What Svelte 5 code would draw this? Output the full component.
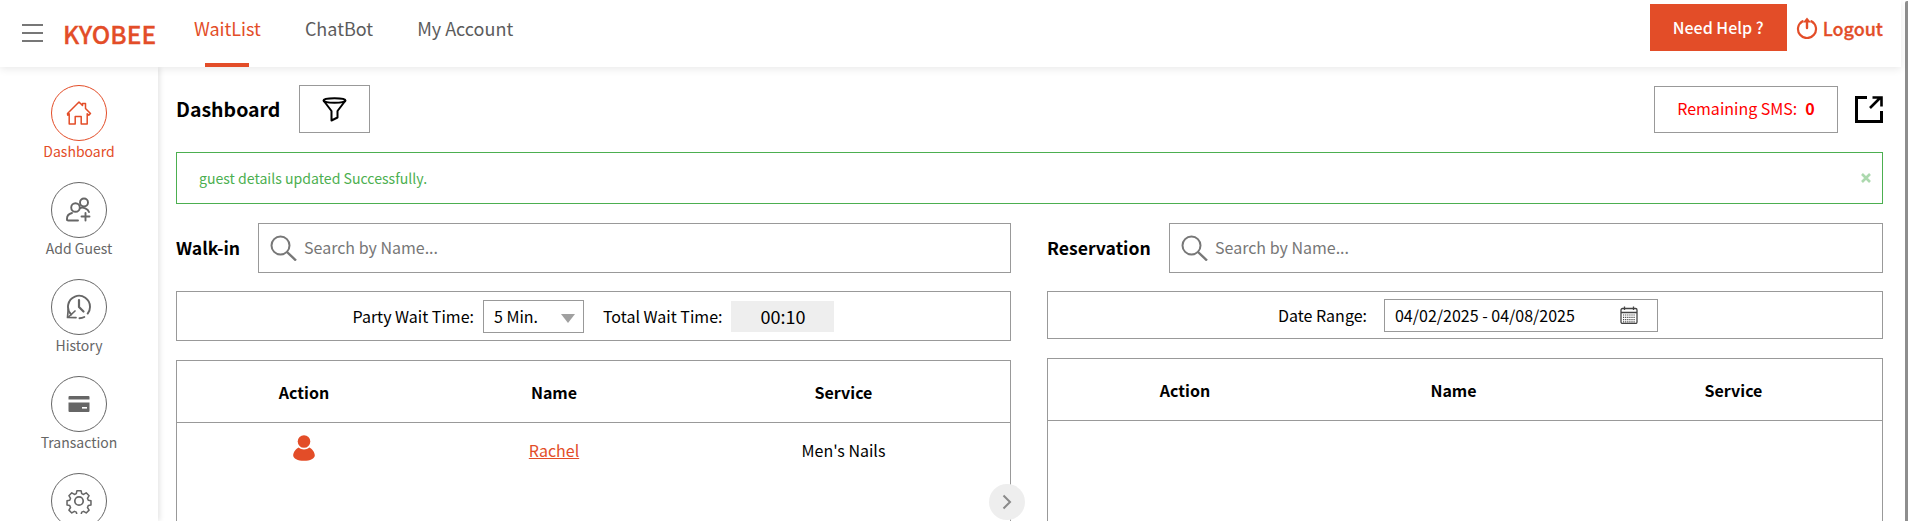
<script>
  const nav = [
    { label: 'WaitList', active: true },
    { label: 'ChatBot', active: false },
    { label: 'My Account', active: false }
  ];
  const left = { cols: '254px 246px 1fr', heads: ['Action', 'Name', 'Service'] };
  const right = { cols: '274px 263px 1fr', heads: ['Action', 'Name', 'Service'] };
</script>

<div class="page">
  <header class="top">
    <button class="burger" aria-label="menu"><span></span><span></span><span></span></button>
    <div class="logo">KYOBEE</div>
    <nav class="nav">
      {#each nav as n}
        <a class="nav-item" class:active={n.active} href="#top">{n.label}</a>
      {/each}
    </nav>
    <div class="top-right">
      <button class="help">Need Help ?</button>
      <a class="logout" href="#top">
        <svg width="22" height="22" viewBox="0 0 22 22" fill="none" stroke="#e34d28" stroke-width="2.200" stroke-linecap="round">
          <path d="M6.600 4.200a9 9 0 1 0 8.800 0" />
          <path d="M11 11V3" stroke-width="2.400" />
          <path fill="#e34d28" stroke="none" d="M11 .5 15 5.500H7z" />
        </svg>
        <span>Logout</span>
      </a>
    </div>
  </header>

  <div class="body">
    <aside class="side">
      <div class="side-item active">
        <div class="circle">
          <svg width="26" height="26" viewBox="0 0 26 26" fill="none" stroke="currentColor" stroke-width="1.500" stroke-linejoin="round">
            <path d="M1.500 13.500 13 2l3.500 3.500V3.600h3v4.900l5 5-1.700 1.600-1.600-1.400V24h-6v-7.500h-6V24h-6V13.700l-1.500 1.400z" />
          </svg>
        </div>
        <span>Dashboard</span>
      </div>
      <div class="side-item">
        <div class="circle">
          <svg width="26" height="26" viewBox="0 0 26 26" fill="none" stroke="currentColor" stroke-width="1.900" stroke-linecap="round">
            <circle cx="9.500" cy="10.500" r="4.300" />
            <circle cx="18" cy="5.500" r="4" />
            <path d="M1 23v-1.500C1 18 4 16.500 6 16M2 23.500h10M14 11c3-1 8 .5 9 4M19.500 16v7.500M15.500 19.500h8" />
          </svg>
        </div>
        <span>Add Guest</span>
      </div>
      <div class="side-item">
        <div class="circle">
          <svg width="26" height="26" viewBox="0 0 26 26" fill="none" stroke="currentColor" stroke-width="1.900" stroke-linecap="round" stroke-linejoin="round">
            <path d="M5.200 20.500A11 11 0 1 1 24 13c0 2.600-.8 4.800-2.300 6.600" />
            <path d="M13 6v7l4.500 4.500" stroke-width="2.200" />
            <path d="M13.500 24.200c1.800 0 3.300-.4 4.800-1.200" />
            <path d="M2.200 15.500 1.500 23.500l8.500.2" stroke-width="1.700" />
            <path d="M2.500 23 9 17" stroke-width="1.700" />
          </svg>
        </div>
        <span>History</span>
      </div>
      <div class="side-item">
        <div class="circle">
          <svg width="22" height="18" viewBox="0 0 22 18">
            <path fill="currentColor" d="M1.500 1h19a1 1 0 0 1 1 1v2.500H.5V2a1 1 0 0 1 1-1zM.5 7.500h21V16a1 1 0 0 1-1 1h-19a1 1 0 0 1-1-1z" />
            <rect x="14" y="12" width="5" height="1.600" fill="#fff" />
          </svg>
        </div>
        <span>Transaction</span>
      </div>
      <div class="side-item">
        <div class="circle">
          <svg width="26" height="26" viewBox="0 0 26 26" fill="none" stroke="currentColor" stroke-width="1.700" stroke-linejoin="round">
            <circle cx="13" cy="13" r="4.200" />
            <path d="M10.700 1.500h4.600l.7 3.300 2.100.9 2.900-1.800 3.200 3.200-1.800 2.900.9 2.100 3 .7v4.600l-3 .7-.9 2.100 1.800 2.900-3.200 3.200-2.900-1.800-2.100.9-.7 3h-4.600l-.7-3-2.100-.9-2.900 1.800-3.200-3.200 1.800-2.900-.9-2.100-3-.7v-4.600l3-.7.9-2.100-1.800-2.900 3.200-3.200 2.900 1.800 2.100-.9z" transform="translate(1.300 1.300) scale(.9)" />
          </svg>
        </div>
      </div>
    </aside>

    <main class="content">
      <div class="head-row">
        <h1>Dashboard</h1>
        <button class="filter" aria-label="filter">
          <svg width="25" height="25" viewBox="0 0 25 25" fill="none" stroke="#000" stroke-width="2" stroke-linejoin="round">
            <ellipse cx="12.500" cy="3.500" rx="11" ry="2.300" />
            <path d="M1.500 3.500 9.500 14v9.500l6-3V14l8-10.500" />
          </svg>
        </button>
        <div class="sms"><span>Remaining SMS:</span><b>0</b></div>
        <svg class="open" width="28" height="27" viewBox="0 0 28 27" fill="none" stroke="#000" stroke-width="3">
          <path d="M12 1.500H1.500v24h25V15" />
          <path d="M15 12 25 2M17.500 1.500h9v9" stroke-width="2.600" />
        </svg>
      </div>

      <div class="alert">
        <span>guest details updated Successfully.</span>
        <svg width="10" height="10" viewBox="0 0 10 10" stroke="#acd9ae" stroke-width="2.600"><path d="m1 1 8 8M9 1l-8 8" /></svg>
      </div>

      <div class="cols">
        <section class="col">
          <div class="search-row">
            <div class="search-label walk">Walk-in</div>
            <div class="search">
              <svg width="27" height="26" viewBox="0 0 27 26" fill="none" stroke="#777" stroke-width="2">
                <circle cx="10.500" cy="10.500" r="9" />
                <path d="m17 17 9 8.500" stroke-width="2.400" />
              </svg>
              <span>Search by Name...</span>
            </div>
          </div>
          <div class="bar tall">
            <span>Party Wait Time:</span>
            <div class="select">5 Min.<i class="tri"></i></div>
            <span class="total">Total Wait Time:</span>
            <div class="time">00:10</div>
          </div>
          <div class="table">
            <div class="thead" style="grid-template-columns: {left.cols}">
              {#each left.heads as h}<div>{h}</div>{/each}
            </div>
            <div class="tr" style="grid-template-columns: {left.cols}">
              <div class="person">
                <svg width="22" height="26" viewBox="0 0 22 26" fill="#e34d28">
                  <circle cx="11" cy="6.500" r="6.300" />
                  <path d="M5.500 12.500c3 2.500 8 2.500 11 0 3 1.500 5.300 5 5.300 8 0 3-4.500 5.300-10.800 5.300S.2 23.500.2 20.500c0-3 2.300-6.500 5.300-8z" />
                </svg>
              </div>
              <div><a class="guest" href="#top">Rachel</a></div>
              <div>Men's Nails</div>
            </div>
          </div>
          <button class="chev" aria-label="next">
            <svg width="10" height="16" viewBox="0 0 10 16" fill="none" stroke="#8a8a8a" stroke-width="2"><path d="m1.500 1.500 6.500 6.500-6.500 6.500" /></svg>
          </button>
        </section>

        <section class="col">
          <div class="search-row">
            <div class="search-label res">Reservation</div>
            <div class="search">
              <svg width="27" height="26" viewBox="0 0 27 26" fill="none" stroke="#777" stroke-width="2">
                <circle cx="10.500" cy="10.500" r="9" />
                <path d="m17 17 9 8.500" stroke-width="2.400" />
              </svg>
              <span>Search by Name...</span>
            </div>
          </div>
          <div class="bar short">
            <span>Date Range:</span>
            <div class="date">
              <span>04/02/2025 - 04/08/2025</span>
              <svg width="18" height="18" viewBox="0 0 18 18" fill="none" stroke="#444" stroke-width="1.300">
                <rect x="1" y="2.500" width="16" height="15" rx="1.500" fill="#fff" />
                <path d="M1 6.500h16M4.500 .5v3.500M13.500 .5v3.500" />
                <path d="M3 9h12M3 11.300h12M3 13.600h12M3 15.800h12" stroke-dasharray="1.200 .9" stroke-width="1.200" />
              </svg>
            </div>
          </div>
          <div class="table">
            <div class="thead" style="grid-template-columns: {right.cols}">
              {#each right.heads as h}<div>{h}</div>{/each}
            </div>
          </div>
        </section>
      </div>
    </main>
  </div>

  <div class="thumb"></div>
</div>

<style>
  :global(body) {
    margin: 0;
    background: #fff;
    overflow: hidden;
  }
  .page {
    position: relative;
    width: 1908px;
    height: 521px;
    overflow: hidden;
    font-family: "Noto Sans CJK JP", "Noto Sans", sans-serif;
    color: #000;
    background: #fff;
  }
  button {
    font-family: inherit;
    cursor: pointer;
  }
  a {
    text-decoration: none;
  }
  .top {
    position: relative;
    z-index: 2;
    box-sizing: border-box;
    width: 1901px;
    height: 67px;
    display: flex;
    align-items: center;
    padding: 0 18px 0 22px;
    background: #fff;
    box-shadow: 0 2px 8px rgba(0, 0, 0, 0.09);
  }
  .burger {
    display: flex;
    flex-direction: column;
    gap: 6px;
    width: 21px;
    padding: 0;
    margin: 0 0 1px;
    border: 0;
    background: none;
  }
  .burger span {
    display: block;
    height: 2px;
    background: #777;
  }
  .logo {
    margin-left: 20px;
    width: 92px;
    font-size: 24.500px;
    line-height: 30px;
    font-weight: 500;
    color: #e34d28;
    white-space: nowrap;
    -webkit-text-stroke: 0.3px #e34d28;
  }
  .nav {
    display: flex;
    height: 67px;
    margin-left: 39px;
    gap: 44px;
  }
  .nav-item {
    position: relative;
    font-size: 18px;
    line-height: 56px;
    color: #5c5c5c;
  }
  .nav-item.active {
    color: #e34d28;
  }
  .nav-item.active::after {
    content: "";
    position: absolute;
    left: 11px;
    right: 12px;
    bottom: 0;
    height: 4px;
    background: #e34d28;
  }
  .top-right {
    margin-left: auto;
    display: flex;
    align-items: center;
    height: 67px;
  }
  .help {
    width: 137px;
    height: 47px;
    margin: 0 0 12px;
    padding: 0 0 2px;
    border: 0;
    background: #e34d28;
    color: #fff;
    font-size: 16px;
    font-weight: 500;
  }
  .logout {
    display: flex;
    align-items: center;
    gap: 5px;
    margin: 0 0 11px 9px;
    color: #e34d28;
    font-size: 18px;
    font-weight: 500;
    line-height: 24px;
    -webkit-text-stroke: 0.3px #e34d28;
  }
  .body {
    display: flex;
    width: 1901px;
  }
  .side {
    flex: none;
    box-sizing: border-box;
    width: 158px;
    height: 454px;
    padding-top: 18px;
    display: flex;
    flex-direction: column;
    align-items: center;
    gap: 12px;
    color: #666;
    box-shadow: 2px 0 5px rgba(0, 0, 0, 0.1);
    position: relative;
    z-index: 1;
  }
  .side-item {
    flex: none;
    display: flex;
    flex-direction: column;
    align-items: center;
    width: 100px;
    height: 85px;
    font-size: 14px;
    line-height: 20px;
  }
  .side-item.active {
    color: #e34d28;
  }
  .circle {
    box-sizing: border-box;
    flex: none;
    width: 56px;
    height: 56px;
    border: 1.300px solid #666;
    border-radius: 50%;
    display: flex;
    align-items: center;
    justify-content: center;
  }
  .side-item.active .circle {
    border-color: #e34d28;
  }
  .content {
    flex: 1;
    min-width: 0;
    padding: 18px 18px 0 18px;
  }
  .head-row {
    display: flex;
    align-items: center;
    height: 48px;
  }
  h1 {
    margin: 0;
    width: 123px;
    font-size: 19.500px;
    line-height: 30px;
    font-weight: 700;
  }
  .filter {
    width: 71px;
    height: 48px;
    padding: 0;
    border: 1.300px solid #999;
    background: #fff;
    display: flex;
    align-items: center;
    justify-content: center;
  }
  .sms {
    box-sizing: border-box;
    margin-left: auto;
    width: 184px;
    height: 47px;
    margin-right: 17px;
    display: flex;
    align-items: center;
    justify-content: center;
    gap: 8px;
    border: 1.300px solid #999;
    color: #f00;
    font-size: 16px;
    line-height: 24px;
  }
  .sms span {
    margin-bottom: 2px;
  }
  .sms b {
    margin-bottom: 2px;
  }
  .open {
    flex: none;
  }
  .alert {
    box-sizing: border-box;
    height: 52px;
    margin-top: 19px;
    padding: 0 11px 0 22px;
    display: flex;
    align-items: center;
    justify-content: space-between;
    border: 1.300px solid #4caf50;
    color: #4caf50;
    font-size: 14.100px;
    line-height: 20px;
  }
  .cols {
    display: grid;
    grid-template-columns: 835px 836px;
    gap: 36px;
    margin-top: 19px;
  }
  .col {
    position: relative;
    min-width: 0;
  }
  .search-row {
    display: flex;
    align-items: center;
    height: 50px;
  }
  .search-label {
    flex: none;
    font-size: 17.600px;
    line-height: 24px;
    font-weight: 700;
  }
  .walk {
    width: 82px;
  }
  .res {
    width: 122px;
  }
  .search {
    flex: 1;
    box-sizing: border-box;
    height: 50px;
    display: flex;
    align-items: center;
    gap: 7px;
    padding-left: 11px;
    border: 1.300px solid #999;
    color: #777;
    font-size: 16px;
    line-height: 22px;
  }
  .search span {
    margin-bottom: 2px;
  }
  .bar {
    box-sizing: border-box;
    margin-top: 18px;
    display: flex;
    align-items: center;
    justify-content: center;
    border: 1.300px solid #999;
    font-size: 16px;
    line-height: 24px;
  }
  .tall {
    height: 50px;
  }
  .short {
    height: 48px;
    padding-left: 6px;
  }
  .select {
    position: relative;
    box-sizing: border-box;
    width: 101px;
    height: 33px;
    margin-left: 9px;
    padding-left: 10px;
    border: 1.300px solid #999;
    line-height: 31px;
  }
  .tri {
    position: absolute;
    right: 8px;
    top: 13px;
    width: 0;
    height: 0;
    border-left: 7px solid transparent;
    border-right: 7px solid transparent;
    border-top: 9px solid #a0a0a0;
  }
  .total {
    margin-left: 19px;
  }
  .time {
    width: 103px;
    height: 31px;
    margin-left: 9px;
    background: #eee;
    text-align: center;
    line-height: 30px;
    font-size: 18px;
  }
  .date {
    box-sizing: border-box;
    width: 274px;
    height: 33px;
    margin-left: 17px;
    padding: 0 19px 0 10px;
    display: flex;
    align-items: center;
    justify-content: space-between;
    border: 1.300px solid #999;
  }
  .table {
    box-sizing: border-box;
    height: 300px;
    margin-top: 19px;
    border: 1.300px solid #999;
    font-size: 16px;
    line-height: 24px;
  }
  .thead {
    display: grid;
    height: 62px;
    align-items: center;
    text-align: center;
    font-weight: 700;
    border-bottom: 1.300px solid #999;
    box-sizing: border-box;
  }
  .tr {
    display: grid;
    text-align: center;
    padding-top: 15px;
    align-items: start;
  }
  .person {
    height: 26px;
    margin-top: -3px;
  }
  .guest {
    color: #e34d28;
    text-decoration: underline;
  }
  .chev {
    position: absolute;
    right: -14px;
    top: 261px;
    width: 36px;
    height: 36px;
    padding: 0;
    border: 0;
    border-radius: 50%;
    background: #eee;
    display: flex;
    align-items: center;
    justify-content: center;
  }
  .thumb {
    position: absolute;
    right: 0;
    top: 1px;
    width: 3px;
    height: 520px;
    border-radius: 2px 0 0 0;
    background: #8e8e8e;
  }
</style>
